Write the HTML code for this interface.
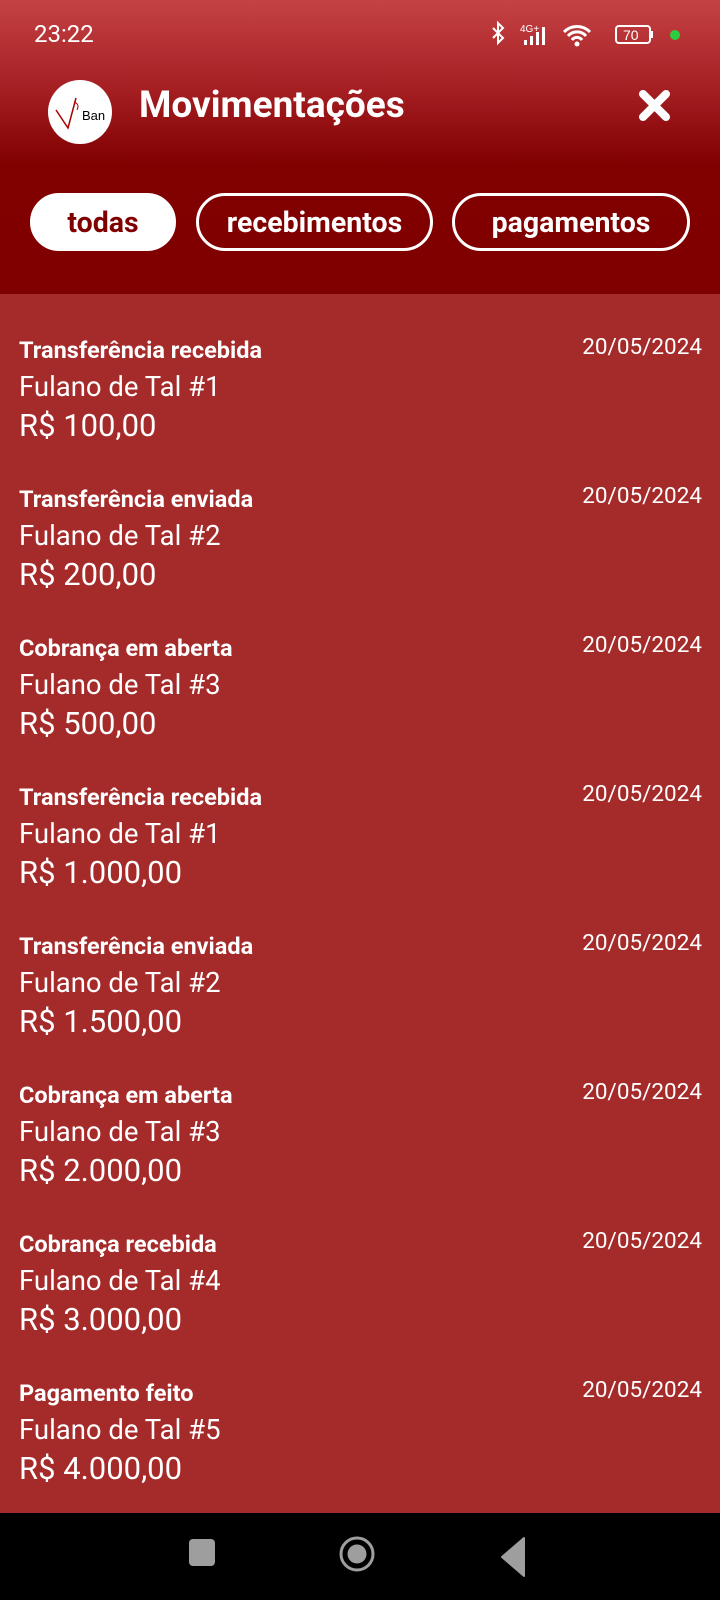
<!DOCTYPE html>
<html><head><meta charset="utf-8"><style>
*{margin:0;padding:0;box-sizing:border-box}
html,body{width:720px;height:1600px;overflow:hidden}
body{font-family:"Roboto","Liberation Sans",sans-serif;background:#a52a2a;color:#fff;position:relative}
.hdr{position:absolute;left:0;top:0;width:720px;height:294px;background:linear-gradient(#c54244 0px,#a41e22 90px,#810000 165px,#800000 294px)}
.t{position:absolute}
.pill{position:absolute;top:193px;height:58px;border:3px solid #fff;border-radius:29px;font-weight:bold;font-size:28.5px;display:flex;align-items:center;justify-content:center;color:#fff}
.item{position:absolute;left:19px;width:683px}
.item .a{font-weight:bold;font-size:23.5px;position:absolute;top:-1px}
.item .d{font-size:22.5px;position:absolute;right:0;top:-3px}
.item .b{font-size:27.5px;position:absolute;top:33px}
.item .c{font-size:31px;position:absolute;top:70px}
.nav{position:absolute;left:0;top:1513px;bottom:0;width:720px;background:#000}
</style></head><body>
<div class="hdr"></div>
<div class="t" style="left:34px;top:20px;font-size:24px">23:22</div>
<svg class="t" style="left:490px;top:20px" width="200" height="30" viewBox="0 0 200 30">
<path d="M3 8l10 10-5 5V3l5 5-10 10" stroke="#fff" stroke-width="2" fill="none"/>
<text x="30" y="12" font-size="10" fill="#fff" font-family="Liberation Sans">4G+</text>
<rect x="34" y="20" width="3" height="5" fill="#fff"/><rect x="40" y="16" width="3" height="9" fill="#fff"/><rect x="46" y="12" width="3" height="13" fill="#fff"/><rect x="52" y="7" width="3" height="18" fill="#fff"/>
<path d="M74 12a18 18 0 0 1 26 0M78 16a12 12 0 0 1 18 0M82 20a6 6 0 0 1 10 0" stroke="#fff" stroke-width="3" fill="none"/><circle cx="87" cy="24" r="2.5" fill="#fff"/>
<rect x="126" y="6" width="34" height="17" rx="3" stroke="#fff" stroke-width="2" fill="none"/><rect x="161" y="11" width="2" height="7" fill="#fff"/>
<text x="133" y="20" font-size="14" fill="#fff" font-family="Liberation Sans">70</text>
<circle cx="185" cy="15" r="5" fill="#2ecc40"/>
</svg>
<div class="t" style="left:48px;top:80px;width:64px;height:64px;border-radius:50%;background:#fff;overflow:hidden">
<svg width="64" height="64"><path d="M8 30l12 18 8-30" stroke="#a00" stroke-width="1.5" fill="none"/><path d="M26 22q6 2 3 8" stroke="#a00" fill="none"/><text x="34" y="40" font-size="13" fill="#000" font-family="Liberation Sans">Ban</text></svg></div>
<div class="t" style="left:139px;top:84px;font-size:37px;font-weight:bold">Movimentações</div>
<svg class="t" style="left:638px;top:89px" width="33" height="33"><path d="M5 5L28 28M28 5L5 28" stroke="#fff" stroke-width="8" stroke-linecap="round"/></svg>
<div class="pill" style="left:30px;width:146px;background:#fff;color:#800000">todas</div>
<div class="pill" style="left:196px;width:237px">recebimentos</div>
<div class="pill" style="left:452px;width:238px">pagamentos</div>

<div class="item" style="top:337px"><div class="a">Transferência recebida</div><div class="d">20/05/2024</div><div class="b">Fulano de Tal #1</div><div class="c">R$ 100,00</div></div>
<div class="item" style="top:486px"><div class="a">Transferência enviada</div><div class="d">20/05/2024</div><div class="b">Fulano de Tal #2</div><div class="c">R$ 200,00</div></div>
<div class="item" style="top:635px"><div class="a">Cobrança em aberta</div><div class="d">20/05/2024</div><div class="b">Fulano de Tal #3</div><div class="c">R$ 500,00</div></div>
<div class="item" style="top:784px"><div class="a">Transferência recebida</div><div class="d">20/05/2024</div><div class="b">Fulano de Tal #1</div><div class="c">R$ 1.000,00</div></div>
<div class="item" style="top:933px"><div class="a">Transferência enviada</div><div class="d">20/05/2024</div><div class="b">Fulano de Tal #2</div><div class="c">R$ 1.500,00</div></div>
<div class="item" style="top:1082px"><div class="a">Cobrança em aberta</div><div class="d">20/05/2024</div><div class="b">Fulano de Tal #3</div><div class="c">R$ 2.000,00</div></div>
<div class="item" style="top:1231px"><div class="a">Cobrança recebida</div><div class="d">20/05/2024</div><div class="b">Fulano de Tal #4</div><div class="c">R$ 3.000,00</div></div>
<div class="item" style="top:1380px"><div class="a">Pagamento feito</div><div class="d">20/05/2024</div><div class="b">Fulano de Tal #5</div><div class="c">R$ 4.000,00</div></div>

<div class="nav"><svg width="720" height="87">
<rect x="189" y="26" width="26" height="27" rx="4" fill="#9e9e9e"/>
<circle cx="357" cy="41" r="16" stroke="#9e9e9e" stroke-width="3" fill="none"/><circle cx="357" cy="41" r="9.5" fill="#9e9e9e"/>
<path d="M524 25v38l-22-19z" fill="#9e9e9e" stroke="#9e9e9e" stroke-linejoin="round" stroke-width="2"/>
</svg></div>
</body></html>
